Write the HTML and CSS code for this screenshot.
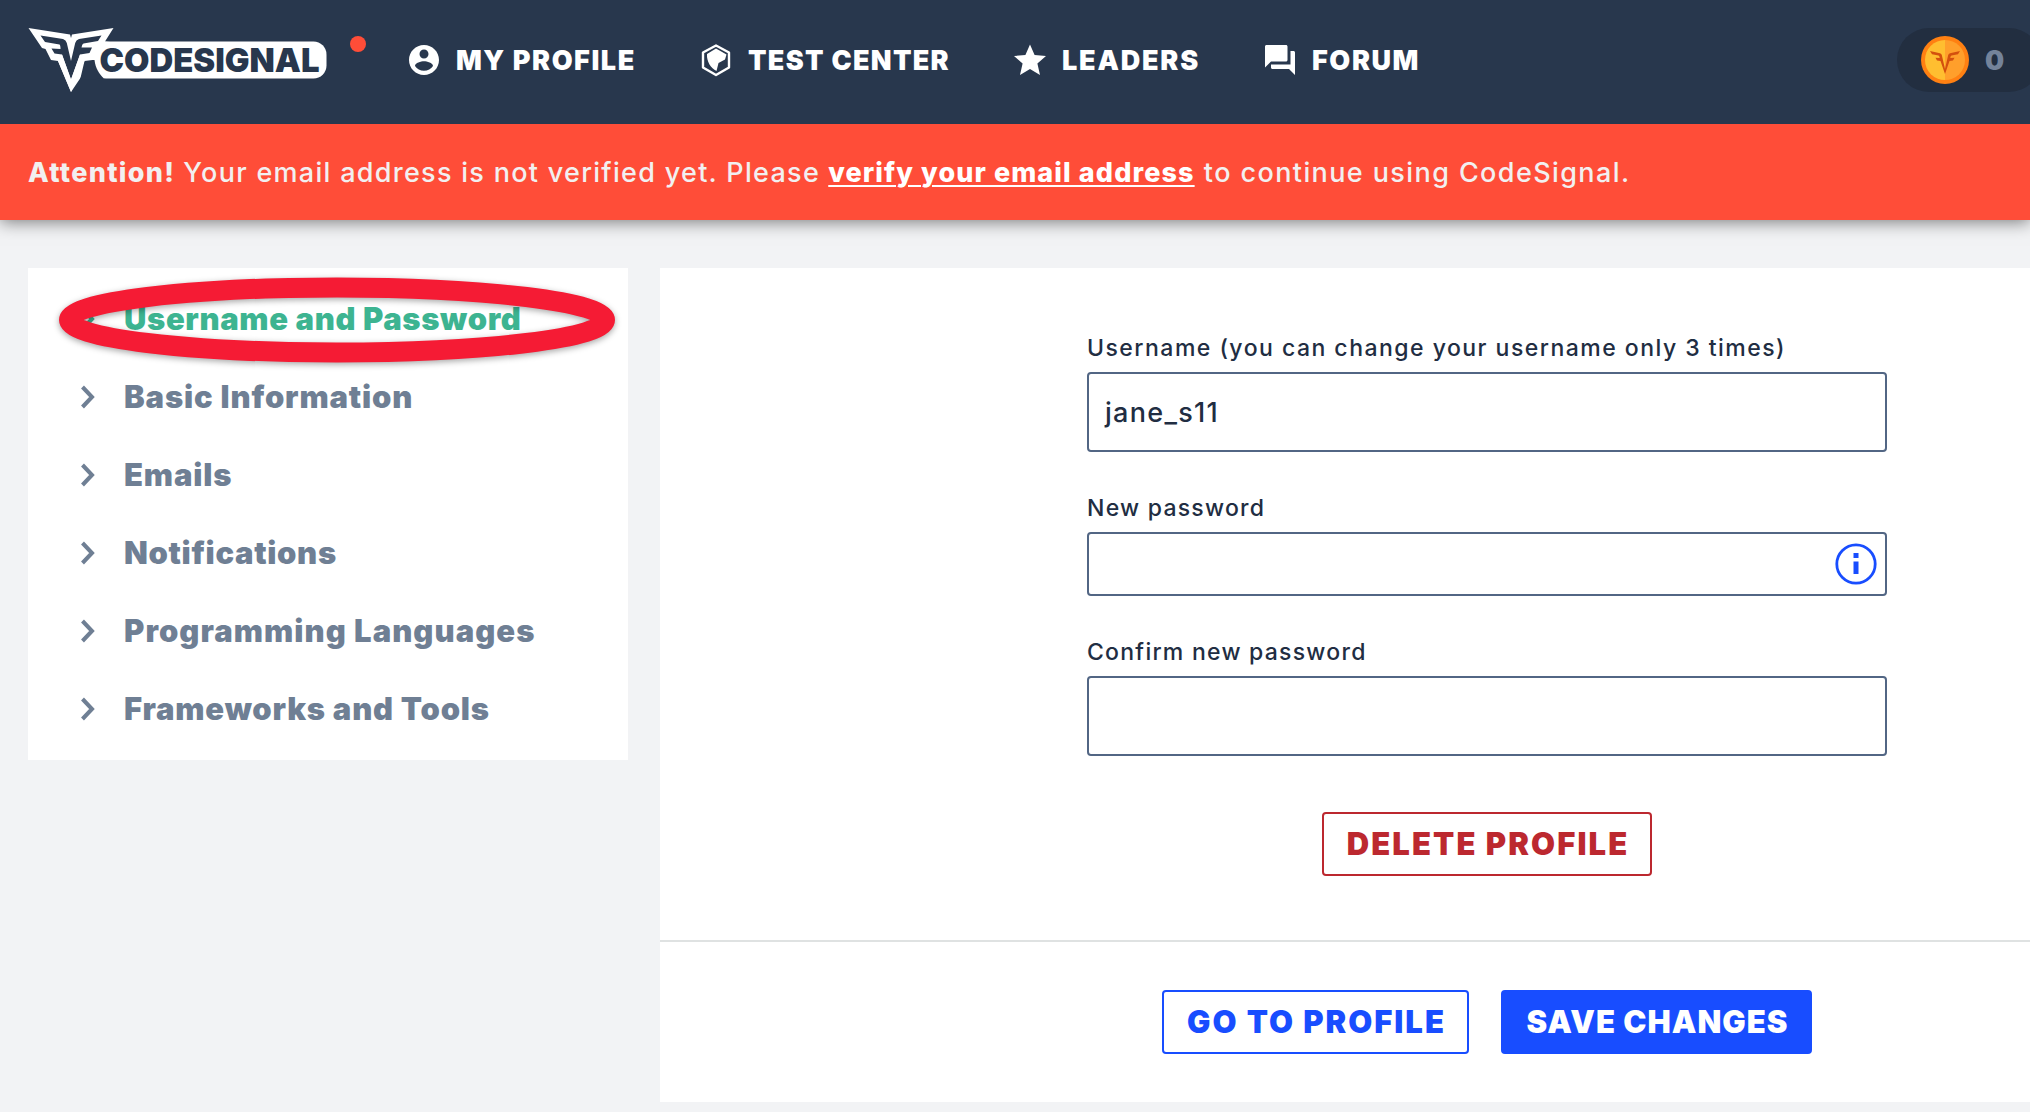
FILE: index.html
```html
<!DOCTYPE html>
<html lang="en">
<head>
<meta charset="utf-8">
<title>CodeSignal - Settings</title>
<link rel="stylesheet" href="styles.css">
</head>
<body>
<header class="header">
  <a class="logo">
    <svg width="300" height="70" viewBox="28 26 300 70">
      <rect x="93" y="41.500" width="233.500" height="37" rx="13" fill="#fff"/>
      <path fill="#fff" d="M28.500 28 L70 34.500 L71 38 L72 34.500 L113.500 28 L105 41.500 L110 42 L96 60 L92.500 60 L71 92 L58 61 L51 60 L45.500 49 L42 48 Z"/>
      <path fill="#28374d" d="M92.500 60 L94.500 60 C95.500 68 99 74 104 78.500 L80 80 L84.500 61 Z"/>
      <path fill="#28374d" d="M40.500 35.500 L63 39 Q66 40 66.800 43 L71 61 L75.200 43 Q76 40 79 39 L101.500 35.500 L98 41 L83.500 43.500 Q82 44 81.500 47.500 L92 47.500 L89.500 53 L80 54.500 L71 79.500 L62 54.500 L54.500 53.500 L51.500 48.500 L60.500 49 Q60.500 45 59.500 44.500 L45 42 Z"/>
      <path fill="#fff" d="M58 61 L62 54.500 L71 79.500 L80 54.500 L84.500 61 L71 92 Z"/>
      <text class="logo-text" x="99.500" y="72" textLength="220" lengthAdjust="spacingAndGlyphs">CODESIGNAL</text>
    </svg>
    <i class="dot"></i>
  </a>
  <nav class="nav">
    <a class="nav-item"><svg class="icon" viewBox="0 0 24 24"><path d="M12 2C6.480 2 2 6.480 2 12s4.480 10 10 10 10-4.480 10-10S17.520 2 12 2zm0 3c1.660 0 3 1.340 3 3s-1.340 3-3 3-3-1.340-3-3 1.340-3 3-3zm0 14.200c-2.500 0-4.710-1.280-6-3.220.03-1.990 4-3.080 6-3.080 1.990 0 5.970 1.090 6 3.080-1.290 1.940-3.500 3.220-6 3.220z"/></svg><span class="l1">MY PROFILE</span></a>
    <a class="nav-item"><svg class="icon" viewBox="0 0 36 36"><path d="M18 3.500 L31 10.500 V25.500 L18 33 L5 25.500 V10.500 Z" fill="none" stroke="#fff" stroke-width="2.400" stroke-linejoin="round"/><path d="M18 6.500 L28.500 12.500 L27 17.500 L20.500 21 L18.500 29 C13 26 8.500 20 9 12 Z"/></svg><span class="l2">TEST CENTER</span></a>
    <a class="nav-item"><svg class="icon" viewBox="0 0 36 36"><path d="M18 2.500 L22.600 13 L34 14 L25.400 21.600 L28 33 L18 27 L8 33 L10.600 21.600 L2 14 L13.400 13 Z"/></svg><span class="l3">LEADERS</span></a>
    <a class="nav-item"><svg class="icon" viewBox="0 0 24 24"><path d="M21 6h-2v9H6v2c0 .55.45 1 1 1h11l4 4V7c0-.55-.45-1-1-1zm-4 6V3c0-.55-.45-1-1-1H3c-.55 0-1 .45-1 1v14l4-4h10c.55 0 1-.45 1-1z"/></svg><span class="l4">FORUM</span></a>
  </nav>
  <div class="coins">
    <svg width="48" height="48" viewBox="0 0 48 48"><circle cx="24" cy="24" r="24" fill="#ff8012"/><path d="M24 4a20 20 0 0 0 0 40z" fill="#ffbe30"/><path d="M24 4a20 20 0 0 1 0 40z" fill="#ff9f2b"/><path fill="#d3500e" d="M9 15 L19 17.300 Q20.500 17.800 20.800 19 L24 33 L27.200 19 Q27.500 17.800 29 17.300 L39 15 L37 18.300 L30.500 19.600 Q29.500 20 29.300 22 L33.500 21.800 L32 24.500 L28.500 25 L24 38 L19.500 25 L16 24.500 L14.500 21.800 L18.700 22 Q18.500 20 17.500 19.600 L11 18.300 Z"/></svg>
    <span>0</span>
  </div>
</header>
<div class="banner"><p><b class="b1">Attention!</b> <span class="b2">Your email address is not verified yet. Please</span> <a class="b3">verify your email address</a> <span class="b4">to continue using CodeSignal.</span></p></div>
<div class="content">
  <aside class="sidebar">
    <a class="item active"><svg class="chev" viewBox="0 0 16 24"><path d="M2.500 2 L12 12 L2.500 22"/></svg><span class="s1">Username and Password</span>
      <svg class="mark" viewBox="0 0 580 110"><ellipse cx="290" cy="50" rx="268" ry="32.500"/></svg></a>
    <a class="item"><svg class="chev" viewBox="0 0 16 24"><path d="M2.500 2 L12 12 L2.500 22"/></svg><span class="s2">Basic Information</span></a>
    <a class="item"><svg class="chev" viewBox="0 0 16 24"><path d="M2.500 2 L12 12 L2.500 22"/></svg><span class="s3">Emails</span></a>
    <a class="item"><svg class="chev" viewBox="0 0 16 24"><path d="M2.500 2 L12 12 L2.500 22"/></svg><span class="s4">Notifications</span></a>
    <a class="item"><svg class="chev" viewBox="0 0 16 24"><path d="M2.500 2 L12 12 L2.500 22"/></svg><span class="s5">Programming Languages</span></a>
    <a class="item"><svg class="chev" viewBox="0 0 16 24"><path d="M2.500 2 L12 12 L2.500 22"/></svg><span class="s6">Frameworks and Tools</span></a>
  </aside>
  <main class="panel">
    <form class="form">
      <label class="f1">Username (you can change your username only 3 times)</label>
      <div class="field tall"><span>jane_s11</span></div>
      <label class="f2">New password</label>
      <div class="field short"><svg class="info" viewBox="0 0 42 42"><circle cx="21" cy="21" r="19.200" fill="none" stroke="#184dff" stroke-width="2.800"/><path fill="#184dff" d="M18.500 10h5v5h-5zM18.500 18.500h5v12.500h-5z"/></svg></div>
      <label class="f3">Confirm new password</label>
      <div class="field tall"></div>
      <a class="btn delete"><span class="t1">DELETE PROFILE</span></a>
    </form>
    <footer class="actions">
      <a class="btn go"><span class="t2">GO TO PROFILE</span></a>
      <a class="btn save"><span class="t3">SAVE CHANGES</span></a>
    </footer>
  </main>
</div>
</body>
</html>
```
FILE: styles.css
```css
* { box-sizing: border-box; }
body { margin: 0; width: 2030px; height: 1112px; overflow: hidden; background: #f2f3f5; font-family: Inter, "Open Sans", sans-serif; color: #212d42; }
span, b, a { white-space: nowrap; }
.header { position: relative; z-index: 1; display: flex; align-items: center; height: 124px; padding-left: 28px; background: #28374d; overflow: hidden; }
.logo { display: flex; flex: none; width: 378px; height: 70px; margin-top: -2px; }
.logo-text { font-family: Inter, sans-serif; font-weight: 900; font-size: 33px; fill: #28374d; }
.dot { width: 16px; height: 16px; margin: 10px 0 0 22px; border-radius: 50%; background: #ff4d38; }
.nav { display: grid; grid-template-columns: 292px 314px 250px 635px; flex: none; margin-top: -4px; }
.nav-item { display: flex; align-items: center; gap: 14px; color: #fff; font-size: 27px; font-weight: 900; line-height: 36px; }
.nav-item span { padding-top: 2px; }
.l1 { letter-spacing: 1.55px; }
.l2 { letter-spacing: 1.3px; }
.l3 { letter-spacing: 1.8px; }
.l4 { letter-spacing: 1.6px; }
.icon { width: 36px; height: 36px; fill: #fff; }
.coins { display: flex; flex: none; align-items: center; gap: 16px; width: 144px; height: 64px; margin-top: -4px; padding-left: 24px; border-radius: 32px; background: #222e40; color: #74839a; font-size: 27px; font-weight: 900; }
.banner { position: relative; height: 96px; padding-left: 28px; background: #ff4d38; color: #f2f0f0; font-size: 27px; font-weight: 500; box-shadow: 0 2px 16px rgba(0, 0, 0, .5); }
.banner p { margin: 0; padding-top: 1px; line-height: 96px; white-space: nowrap; }
.banner b { font-weight: 800; }
.banner a { color: #fff; font-weight: 800; text-decoration: underline; text-decoration-thickness: 2px; text-underline-offset: 3px; }
.b1 { letter-spacing: 1.3px; }
.b2 { margin-left: 1px; letter-spacing: 1.29px; }
.b3 { margin-left: 1px; letter-spacing: 1.1px; }
.b4 { margin-left: 2px; letter-spacing: 1.4px; }
.content { display: flex; align-items: flex-start; gap: 32px; padding: 48px 0 0 28px; }
.sidebar { flex: none; width: 600px; padding: 12px 0; background: #fff; }
.item { position: relative; display: flex; align-items: center; gap: 28px; height: 78px; padding-left: 52px; color: #6f7f94; font-size: 31px; font-weight: 900; }
.item span { padding-bottom: 1px; }
.s1 { letter-spacing: .65px; }
.s2 { letter-spacing: .85px; }
.s3 { letter-spacing: .85px; }
.s4 { letter-spacing: .65px; }
.s5 { letter-spacing: 1.05px; }
.s6 { letter-spacing: .8px; }
.chev { width: 16px; height: 24px; fill: none; stroke: currentColor; stroke-width: 4; }
.active { color: #3db491; }
.mark { position: absolute; left: 19px; top: -10px; width: 580px; height: 110px; fill: none; stroke: #f51b34; stroke-width: 20; filter: drop-shadow(0 2px 3px rgba(0, 0, 0, .35)); }
.panel { flex: 1; height: 834px; background: #fff; }
.form { display: flex; flex-direction: column; width: 800px; height: 672px; margin-left: 427px; padding-top: 64px; }
label { height: 40px; line-height: 32px; font-size: 23px; font-weight: 500; }
.f1 { letter-spacing: 1.48px; }
.f2 { letter-spacing: 1.25px; }
.f3 { letter-spacing: 1.25px; }
.field { display: flex; align-items: center; margin-bottom: 40px; padding: 0 8px 0 16px; border: 2px solid #526684; border-radius: 4px; font-size: 27px; font-weight: 500; letter-spacing: 1.3px; }
.tall { height: 80px; }
.short { height: 64px; }
.info { width: 42px; height: 42px; margin-left: auto; }
.btn { display: flex; align-items: center; justify-content: center; height: 64px; border: 2px solid; border-radius: 4px; font-size: 31px; font-weight: 900; }
.btn span { margin-right: -2px; padding-bottom: 1px; }
.t1 { letter-spacing: 2.1px; }
.t2 { letter-spacing: 2px; }
.t3 { letter-spacing: 1.05px; }
.delete { width: 330px; margin-top: 16px; align-self: center; color: #bc282f; }
.actions { display: flex; gap: 32px; height: 162px; padding: 48px 0 0 502px; border-top: 2px solid #dfe2e2; }
.go { width: 307px; color: #184dff; }
.save { width: 311px; border-color: #184dff; background: #184dff; color: #fff; }
```
